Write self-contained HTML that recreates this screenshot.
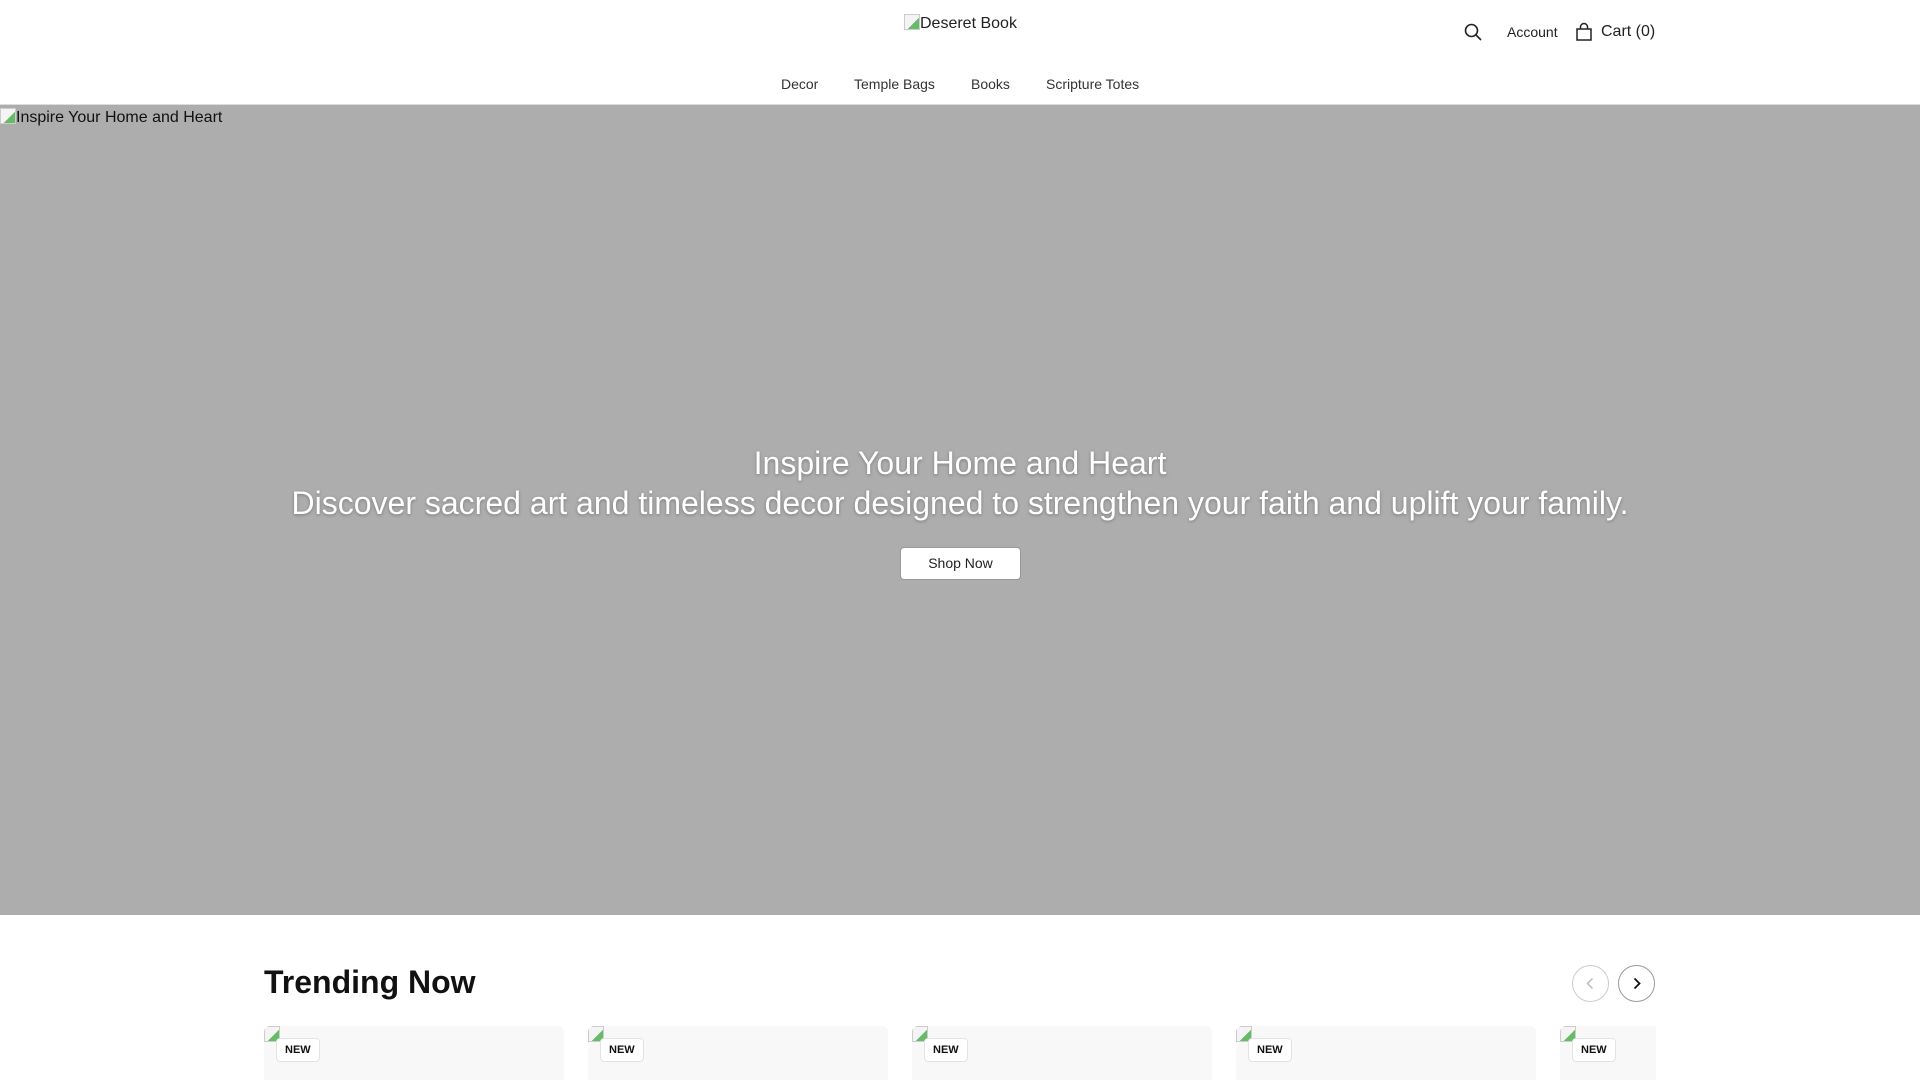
<!DOCTYPE html>
<html style="overflow:hidden;height:1080px"><head><meta charset="utf-8"><style>
*{margin:0;padding:0;box-sizing:border-box}
body{width:1920px;height:1080px;overflow:hidden;font-family:"Liberation Sans",Arial,sans-serif;background:#fff;color:#111;position:relative}
.abs{position:absolute}
header{position:absolute;left:0;top:0;width:1920px;height:105px;border-bottom:1px solid #ddd}
.nav a{position:absolute;top:76px;font-size:14px;color:#333;text-decoration:none;white-space:nowrap}
.hero{position:absolute;left:0;top:105px;width:1920px;height:810px;background:#adadad}
.card{position:absolute;top:1026px;width:300px;height:54px;background:#f8f8f8;border-radius:6px 6px 0 0;overflow:hidden}
.badge{position:absolute;left:12px;top:12px;background:#fff;border:1px solid #e3e3e3;border-radius:4px;font-size:11px;font-weight:bold;padding:5px 8px;color:#111}
.ico{position:absolute;left:0;top:0;width:16px;height:16px;border:1px solid #ccc;background:linear-gradient(135deg,#f4f4f4 60%,#6b6 60%)}
.circ{position:absolute;top:965px;width:37px;height:37px;border:1px solid #ccc;border-radius:50%;background:#fff}
.bi{display:inline-block;width:16px;height:16px;border:1px solid #ccc;background:linear-gradient(135deg,#f4f4f4 60%,#6b6 60%);vertical-align:-2px}
</style></head><body>
<header>
<div class="abs" style="left:904px;top:14px;font-size:16px;color:#222"><span class="bi"></span>Deseret Book</div>
<svg class="abs" style="left:1463px;top:22px" width="20" height="20" viewBox="0 0 20 20" fill="none" stroke="#222" stroke-width="1.6"><circle cx="8.5" cy="8.5" r="6"/><path d="M13 13l5 5"/></svg>
<div class="abs" style="left:1507px;top:24px;font-size:14px;color:#222">Account</div>
<svg class="abs" style="left:1575px;top:22px" width="18" height="20" viewBox="0 0 18 20" fill="none" stroke="#222" stroke-width="1.5"><rect x="2" y="7" width="14" height="11"/><path d="M5.5 7V5a3.5 3.5 0 0 1 7 0v2"/></svg>
<div class="abs" style="left:1601px;top:23px;font-size:16px;color:#222">Cart (0)</div>
<div class="nav"><a style="left:781px">Decor</a><a style="left:854px">Temple Bags</a><a style="left:971px">Books</a><a style="left:1046px">Scripture Totes</a></div>
</header>
<div class="hero">
<div class="abs" style="left:0;top:3px;font-size:16px;color:#111"><span class="bi"></span>Inspire Your Home and Heart</div>
<div class="abs" style="left:0;width:1920px;top:338px;text-align:center;color:#fff;font-size:32px;line-height:40px;text-shadow:0 1px 3px rgba(0,0,0,.3)">Inspire Your Home and Heart<br>Discover sacred art and timeless decor designed to strengthen your faith and uplift your family.</div>
<div class="abs" style="left:900px;top:442px;width:121px;height:33px;background:#fff;border:1px solid #999;border-radius:4px;font-size:14px;text-align:center;line-height:31px;color:#222">Shop Now</div>
</div>
<div class="abs" style="left:264px;top:964px;font-size:32px;font-weight:bold;color:#111">Trending Now</div>
<div class="circ" style="left:1572px"><svg width="35" height="35" viewBox="0 0 35 35" fill="none" stroke="#bbb" stroke-width="1.5"><path d="M19.5 12.5l-5 5 5 5"/></svg></div>
<div class="circ" style="left:1618px;border-color:#999"><svg width="35" height="35" viewBox="0 0 35 35" fill="none" stroke="#111" stroke-width="1.8"><path d="M15.5 12.5l5 5-5 5"/></svg></div>
<div class="card" style="left:264px"><div class="ico"></div><div class="badge">NEW</div></div>
<div class="card" style="left:588px"><div class="ico"></div><div class="badge">NEW</div></div>
<div class="card" style="left:912px"><div class="ico"></div><div class="badge">NEW</div></div>
<div class="card" style="left:1236px"><div class="ico"></div><div class="badge">NEW</div></div>
<div class="card" style="left:1560px;width:96px;border-radius:6px 0 0 0"><div class="ico"></div><div class="badge">NEW</div></div>
</body></html>
